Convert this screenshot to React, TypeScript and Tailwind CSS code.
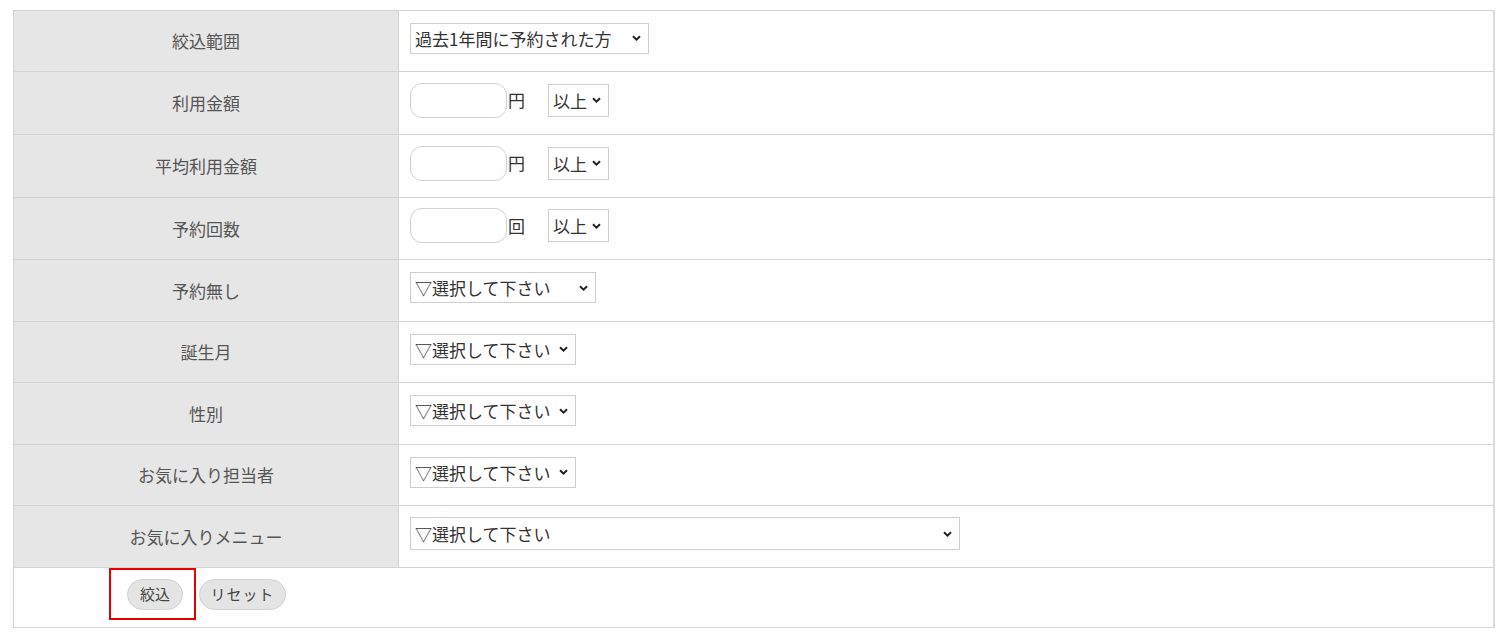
import React from "react";

const font = { fontFamily: '"Noto Sans CJK JP", "Noto Sans", sans-serif' };

function Chevron() {
  return (
    <svg width="9" height="6" viewBox="0 0 9 6" className="shrink-0">
      <path d="M1 1.2 L4.5 4.6 L8 1.2" fill="none" stroke="#222" strokeWidth="2" />
    </svg>
  );
}

function FakeSelect({ text, w, h = 31 }: { text: string; w: number; h?: number }) {
  return (
    <div
      className="flex items-center justify-between border border-[#cfcfcf] bg-white pl-[4px] pr-[7px] text-[17px] text-[#333]"
      style={{ width: w, height: h }}
    >
      <span className="whitespace-nowrap leading-none">{text}</span>
      <Chevron />
    </div>
  );
}

function AmountInput({ unit }: { unit: string }) {
  return (
    <div className="flex items-center">
      <div className="h-[35px] w-[97px] rounded-[12px] border border-[#d0d0d0] bg-white" />
      <span className="ml-[1px] text-[17px] text-[#333]">{unit}</span>
      <div className="ml-[23px]">
        <FakeSelect text="以上" w={61} h={33} />
      </div>
    </div>
  );
}

type Row = { label: string; h: number; content: React.ReactNode };

export default function App() {
  const rows: Row[] = [
    { label: "絞込範囲", h: 61, content: <FakeSelect text="過去1年間に予約された方" w={239} /> },
    { label: "利用金額", h: 63, content: <AmountInput unit="円" /> },
    { label: "平均利用金額", h: 63, content: <AmountInput unit="円" /> },
    { label: "予約回数", h: 62, content: <AmountInput unit="回" /> },
    { label: "予約無し", h: 62, content: <FakeSelect text="▽選択して下さい" w={186} /> },
    { label: "誕生月", h: 61, content: <FakeSelect text="▽選択して下さい" w={166} /> },
    { label: "性別", h: 62, content: <FakeSelect text="▽選択して下さい" w={166} /> },
    { label: "お気に入り担当者", h: 61, content: <FakeSelect text="▽選択して下さい" w={166} /> },
    { label: "お気に入りメニュー", h: 62, content: <FakeSelect text="▽選択して下さい" w={550} h={33} /> },
  ];
  return (
    <div className="min-h-[643px] w-[1508px] bg-white pl-[13px] pt-[10px]" style={font}>
      <div className="w-[1482px] border border-[#d4d4d4] border-r-[#dcdcdc] border-r-2">
        {rows.map((r, i) => (
          <div
            key={i}
            className="flex border-b border-[#d4d4d4]"
            style={{ height: r.h }}
          >
            <div className="flex w-[385px] shrink-0 items-center justify-center border-r border-[#d4d4d4] bg-[#e6e6e6] text-[17px] text-[#555]">
              {r.label}
            </div>
            <div className="flex flex-1 items-center pb-[6px] pl-[11px]">{r.content}</div>
          </div>
        ))}
        <div className="relative flex h-[59px] items-center gap-[16px] pb-[6px] pl-[113px]">
          <button className="h-[31px] w-[56px] rounded-full border border-[#d2d2d2] bg-[#e4e4e4] text-[15px] text-[#444]">
            絞込
          </button>
          <button className="h-[31px] w-[87px] rounded-full border border-[#d2d2d2] bg-[#e4e4e4] text-[15px] text-[#444] tracking-[1px]">
            リセット
          </button>
          <div className="pointer-events-none absolute left-[95px] top-[0px] h-[52px] w-[87px] border-2 border-[#e60000]" />
        </div>
      </div>
    </div>
  );
}
